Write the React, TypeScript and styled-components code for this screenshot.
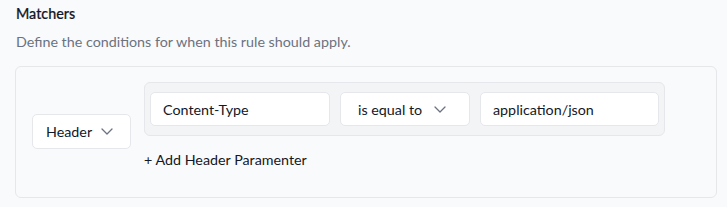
import styled, { createGlobalStyle } from 'styled-components';

const GlobalStyle = createGlobalStyle`
  html, body {
    margin: 0;
    padding: 0;
    background: #f9fafb;
    font-family: Lato, "Noto Sans", "Liberation Sans", sans-serif;
    -webkit-font-smoothing: antialiased;
  }
`;

const ChevronDown = () => (
  <svg width="12" height="7" viewBox="0 0 12 7" fill="none">
    <path d="M1 1l5 5 5-5" stroke="#6b7280" strokeWidth="1.3" strokeLinecap="round" strokeLinejoin="round" />
  </svg>
);

const App = () => {
  const conditions = [
    { kind: 'input', value: 'Content-Type', width: 180 },
    { kind: 'select', value: 'is equal to', width: 130 },
    { kind: 'input', value: 'application/json', width: 179 },
  ];

  return (
    <>
      <GlobalStyle />
      <Section>
        <Title>Matchers</Title>
        <Description>Define the conditions for when this rule should apply.</Description>
        <Card>
          <TypeSelect>
            <span>Header</span>
            <ChevronDown />
          </TypeSelect>
          <Params>
            <ConditionGroup>
              {conditions.map((item, index) =>
                item.kind === 'select' ? (
                  <Field key={index} $width={item.width} $select>
                    <span>{item.value}</span>
                    <ChevronDown />
                  </Field>
                ) : (
                  <Field key={index} $width={item.width}>
                    <span>{item.value}</span>
                  </Field>
                ),
              )}
            </ConditionGroup>
            <AddButton>+ Add Header Paramenter</AddButton>
          </Params>
        </Card>
      </Section>
    </>
  );
};

const Section = styled.div`
  padding: 4px 10px 0 15px;
`;

const Title = styled.h3`
  margin: 0;
  padding-left: 1px;
  font-size: 14.3px;
  line-height: 20px;
  font-weight: 500;
  color: #111827;
  -webkit-text-stroke: 0.2px #111827;
`;

const Description = styled.p`
  margin: 8px 0 0;
  padding-left: 1px;
  font-size: 14.3px;
  line-height: 20px;
  color: #6b7280;
`;

const Card = styled.div`
  display: flex;
  align-items: center;
  gap: 13px;
  margin-top: 14px;
  padding: 15px 16px 16px;
  border: 1px solid #e5e7eb;
  border-radius: 6px;
  background: #f9fafb;
`;

const TypeSelect = styled.div`
  display: flex;
  align-items: center;
  justify-content: space-between;
  box-sizing: border-box;
  width: 99px;
  height: 35px;
  padding: 0 17px 0 13px;
  border: 1px solid #e5e7eb;
  border-radius: 5px;
  background: #ffffff;
  font-size: 14.3px;
  color: #111827;
`;

const Params = styled.div`
  display: flex;
  flex-direction: column;
  align-items: flex-start;
`;

const ConditionGroup = styled.div`
  display: flex;
  gap: 10px;
  padding: 9px 5px;
  border: 1px solid #e5e7eb;
  border-radius: 6px;
  background: #f3f4f6;
`;

const Field = styled.div<{ $width: number; $select?: boolean }>`
  display: flex;
  align-items: center;
  justify-content: space-between;
  box-sizing: border-box;
  width: ${({ $width }) => $width}px;
  height: 34px;
  padding: ${({ $select }) => ($select ? '0 23px 0 17px' : '0 12px')};
  border: 1px solid #e5e7eb;
  border-radius: 5px;
  background: #ffffff;
  font-size: 14.3px;
  color: #111827;
`;

const AddButton = styled.button`
  margin-top: 14px;
  margin-bottom: 11px;
  padding: 0;
  border: none;
  background: none;
  font-family: inherit;
  font-size: 14.3px;
  line-height: 20px;
  color: #111827;
  cursor: pointer;
`;

export default App;
